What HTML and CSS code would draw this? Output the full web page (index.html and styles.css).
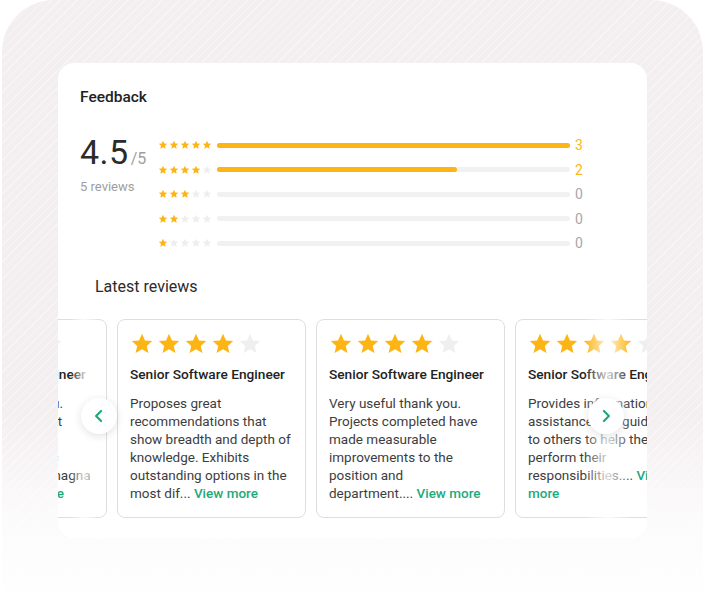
FILE: index.html
```html
<!DOCTYPE html>
<html>
<head>
	<meta name="viewport" content="width=device-width, initial-scale=1.0">
	<title>Feedback</title>
	<link rel="stylesheet" href="styles.css">
</head>
<body>

	<svg class="defs" width="0" height="0">
		<symbol id="star" viewBox="0 0 24 24">
			<path d="M12 1.8l3 6.6 7.2.7-5.4 4.8 1.6 7.1L12 17.3 5.6 21l1.6-7.1L1.8 9.1 9 8.4z"/>
		</symbol>
	</svg>

	<div class="stage">
		<div class="panel">

			<h1 class="title">Feedback</h1>

			<div class="summary">
				<div class="score">
					<div class="score-value">4.5<span class="score-max">/5</span></div>
					<div class="score-count">5 reviews</div>
				</div>

				<div class="breakdown">
					<div class="row">
						<div class="mini-stars">
							<svg class="on"><use href="#star"/></svg><svg class="on"><use href="#star"/></svg><svg class="on"><use href="#star"/></svg><svg class="on"><use href="#star"/></svg><svg class="on"><use href="#star"/></svg>
						</div>
						<div class="bar"><div class="fill" style="width: 100%"></div></div>
						<span class="num active">3</span>
					</div>
					<div class="row">
						<div class="mini-stars">
							<svg class="on"><use href="#star"/></svg><svg class="on"><use href="#star"/></svg><svg class="on"><use href="#star"/></svg><svg class="on"><use href="#star"/></svg><svg><use href="#star"/></svg>
						</div>
						<div class="bar"><div class="fill" style="width: 68%"></div></div>
						<span class="num active">2</span>
					</div>
					<div class="row">
						<div class="mini-stars">
							<svg class="on"><use href="#star"/></svg><svg class="on"><use href="#star"/></svg><svg class="on"><use href="#star"/></svg><svg><use href="#star"/></svg><svg><use href="#star"/></svg>
						</div>
						<div class="bar"><div class="fill" style="width: 0%"></div></div>
						<span class="num">0</span>
					</div>
					<div class="row">
						<div class="mini-stars">
							<svg class="on"><use href="#star"/></svg><svg class="on"><use href="#star"/></svg><svg><use href="#star"/></svg><svg><use href="#star"/></svg><svg><use href="#star"/></svg>
						</div>
						<div class="bar"><div class="fill" style="width: 0%"></div></div>
						<span class="num">0</span>
					</div>
					<div class="row">
						<div class="mini-stars">
							<svg class="on"><use href="#star"/></svg><svg><use href="#star"/></svg><svg><use href="#star"/></svg><svg><use href="#star"/></svg><svg><use href="#star"/></svg>
						</div>
						<div class="bar"><div class="fill" style="width: 0%"></div></div>
						<span class="num">0</span>
					</div>
				</div>
			</div>

			<h2 class="subtitle">Latest reviews</h2>

			<div class="carousel">
				<div class="track">

					<div class="review">
						<div class="stars">
							<svg class="on"><use href="#star"/></svg><svg class="on"><use href="#star"/></svg><svg class="on"><use href="#star"/></svg><svg class="on"><use href="#star"/></svg><svg><use href="#star"/></svg>
						</div>
						<h3 class="role">Senior Software Engineer</h3>
						<p class="text">Very useful thank you. Lorem ipsum dolor sit amet, consectetur adipiscing velit, basic tempor ut et dolore magna et aliqua.... <a class="more" href="#">View more</a></p>
					</div>

					<div class="review">
						<div class="stars">
							<svg class="on"><use href="#star"/></svg><svg class="on"><use href="#star"/></svg><svg class="on"><use href="#star"/></svg><svg class="on"><use href="#star"/></svg><svg><use href="#star"/></svg>
						</div>
						<h3 class="role">Senior Software Engineer</h3>
						<p class="text">Proposes great recommendations that show breadth and depth of knowledge. Exhibits outstanding options in the most dif... <a class="more" href="#">View more</a></p>
					</div>

					<div class="review">
						<div class="stars">
							<svg class="on"><use href="#star"/></svg><svg class="on"><use href="#star"/></svg><svg class="on"><use href="#star"/></svg><svg class="on"><use href="#star"/></svg><svg><use href="#star"/></svg>
						</div>
						<h3 class="role">Senior Software Engineer</h3>
						<p class="text">Very useful thank you. Projects completed have made measurable improvements to the position and<br>department.... <a class="more" href="#">View more</a></p>
					</div>

					<div class="review">
						<div class="stars">
							<svg class="on"><use href="#star"/></svg><svg class="on"><use href="#star"/></svg><svg class="on"><use href="#star"/></svg><svg class="on"><use href="#star"/></svg><svg><use href="#star"/></svg>
						</div>
						<h3 class="role">Senior Software Engineer</h3>
						<p class="text">Provides information assistance and guidance to others to help them perform their responsibilities.... <a class="more" href="#">View more</a></p>
					</div>

				</div>

				<div class="fade fade-left"></div>
				<div class="fade fade-right"></div>

				<button class="arrow arrow-left">
					<svg viewBox="0 0 24 24"><path d="M14.5 6l-6 6 6 6"/></svg>
				</button>
				<button class="arrow arrow-right">
					<svg viewBox="0 0 24 24"><path d="M9.5 6l6 6-6 6"/></svg>
				</button>
			</div>

		</div>
	</div>

</body>
</html>
```

FILE: styles.css
```css
body{
	margin: 0;
	background: #fff;
	font-family: Roboto, "Liberation Sans", sans-serif;
	color: #222;
	overflow: hidden;
}

.defs{
	position: absolute;
}

.stage{
	position: relative;
	height: 600px;
	margin: 0 1px 0 2px;
	padding: 63px 56px 0 56px;
	box-sizing: border-box;
	border-radius: 52px 52px 0 0;
	background-color: #f3eef0;
	background-image: repeating-linear-gradient(135deg, rgba(255,255,255,0) 0px, rgba(255,255,255,0) 5px, rgba(255,255,255,.4) 5px, rgba(255,255,255,.4) 6px);
}

.stage::after{
	content: "";
	position: absolute;
	left: 0;
	right: 0;
	bottom: 0;
	height: 190px;
	background: linear-gradient(to bottom, rgba(255,255,255,0), rgba(255,255,255,.75) 55%, #fff);
}

.panel{
	position: relative;
	z-index: 1;
	height: 475px;
	background: #fff;
	border-radius: 16px;
	overflow: hidden;
}

.title{
	margin: 0;
	padding: 24px 0 0 22px;
	font-size: 15.5px;
	line-height: 20px;
	font-weight: 500;
	color: #222;
}

.summary{
	display: flex;
	padding: 29px 0 0 22px;
}

.score{
	width: 78px;
	margin-top: -4px;
}

.score-value{
	font-size: 34px;
	line-height: 40px;
	color: #2b2b2b;
	letter-spacing: .5px;
}

.score-max{
	margin-left: 2px;
	font-size: 16px;
	color: #9e9e9e;
	letter-spacing: 0;
}

.score-count{
	font-size: 13px;
	color: #9e9e9e;
}

.breakdown{
	display: flex;
	flex-direction: column;
	gap: 6px;
}

.row{
	display: flex;
	align-items: center;
	height: 18.5px;
}

.mini-stars{
	display: flex;
	gap: 1px;
	width: 59px;
}

.mini-stars svg{
	width: 10px;
	height: 10px;
	fill: #eeeeee;
}

.mini-stars svg.on,
.stars svg.on{
	fill: #fdb515;
}

.bar{
	width: 353px;
	height: 5px;
	border-radius: 3px;
	background: #f1f1f1;
}

.fill{
	height: 100%;
	border-radius: 3px;
	background: #fdb515;
}

.num{
	margin-left: 5px;
	font-size: 14px;
	color: #a8a8a8;
}

.num.active{
	color: #fdb515;
}

.subtitle{
	margin: 0;
	padding: 24px 0 0 37px;
	font-size: 16px;
	line-height: 20px;
	font-weight: 400;
	color: #2b2b2b;
}

.carousel{
	position: relative;
	margin-top: 22px;
	height: 200px;
}

.track{
	display: flex;
	gap: 10px;
	margin-left: -140px;
}

.review{
	flex: none;
	width: 189px;
	height: 199px;
	box-sizing: border-box;
	padding: 12px 13px 0 12px;
	border: 1px solid #dedede;
	border-radius: 8px;
	background: #fff;
}

.stars{
	display: flex;
	gap: 3px;
	height: 24px;
}

.stars svg{
	width: 24px;
	height: 24px;
	fill: #efefef;
}

.role{
	margin: 9px 0 0 0;
	font-size: 13.7px;
	line-height: 18px;
	font-weight: 500;
	color: #222;
}

.text{
	margin: 11px 0 0 0;
	font-size: 13.5px;
	line-height: 18px;
	color: #3d3d3d;
}

.more{
	color: #1ea97c;
	font-weight: 500;
	text-decoration: none;
}

.fade{
	position: absolute;
	top: 0;
	bottom: 0;
	background: linear-gradient(to right, rgba(255,255,255,0), rgba(255,255,255,.8), rgba(255,255,255,0));
}

.fade-left{
	left: 12px;
	width: 30px;
}

.fade-right{
	left: 526px;
	width: 48px;
}

.arrow{
	position: absolute;
	top: 79px;
	width: 36px;
	height: 36px;
	padding: 0;
	border: none;
	border-radius: 50%;
	background: #fff;
	box-shadow: 0 2px 8px rgba(0,0,0,.12);
	display: flex;
	align-items: center;
	justify-content: center;
}

.arrow svg{
	width: 20px;
	height: 20px;
	fill: none;
	stroke: #1ea97c;
	stroke-width: 2.6;
	stroke-linecap: round;
	stroke-linejoin: round;
}

.arrow-left{
	left: 23px;
}

.arrow-right{
	right: 23px;
}
```
